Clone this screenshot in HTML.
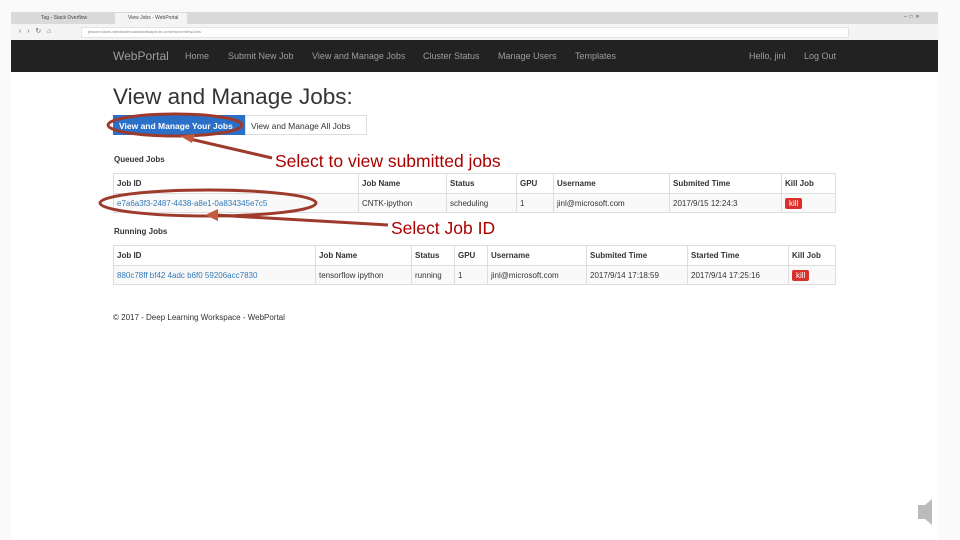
<!DOCTYPE html><html><head><style>
*{margin:0;padding:0;box-sizing:border-box}
body{width:960px;height:540px;background:#fafafa;position:relative;overflow:hidden;font-family:"Liberation Sans",sans-serif}
.a{position:absolute}
.win{left:11px;top:12px;width:927px;height:528px;background:#fff}
.tabs{left:11px;top:12px;width:927px;height:12px;background:#dadada;font-size:5px;color:#444}
.addr{left:11px;top:24px;width:927px;height:16px;background:#f4f4f4}
.nav{left:11px;top:40px;width:927px;height:32px;background:#222;color:#9d9d9d;font-size:9px}
.nav span{position:absolute;top:11px}
table{position:absolute;border-collapse:collapse;font-size:8px;color:#333}
td,th{border:1px solid #ddd;padding:0 3px;height:20px;text-align:left;white-space:nowrap}
th{font-weight:bold}
tr.s td{background:#f9f9f9;height:19px}
.lk{color:#337ab7}
.kill{background:#d9302c;color:#fff;padding:1px 4px;border-radius:2px;font-size:8px}
.red{color:#a00;font-size:17.5px}
</style></head><body>
<div class="a win"></div>
<div class="a tabs"><span class="a" style="left:30px;top:3px">Tag - Stack Overflow</span><div class="a" style="left:104px;top:1px;width:72px;height:11px;background:#f4f4f4"></div><span class="a" style="left:117px;top:3px">View Jobs - WebPortal</span><span class="a" style="left:893px;top:2px">–&nbsp;&nbsp;□&nbsp;&nbsp;✕</span></div>
<div class="a addr"><div class="a" style="left:70px;top:3px;width:768px;height:11px;background:#fff;border:1px solid #e4e4e4"></div><span class="a" style="left:8px;top:3px;font-size:7px;color:#666">‹&nbsp;&nbsp;&nbsp;›&nbsp;&nbsp;&nbsp;↻&nbsp;&nbsp;&nbsp;⌂</span><span class="a" style="left:77px;top:5px;font-size:4px;color:#888">jinlcom.blobs.webhostnnoaulwlvdlsapzure.com/Home/ViewJobs</span></div>
<div class="a nav"><span style="left:102px;top:9px;font-size:12px">WebPortal</span><span style="left:174px">Home</span><span style="left:217px">Submit New Job</span><span style="left:301px">View and Manage Jobs</span><span style="left:412px">Cluster Status</span><span style="left:487px">Manage Users</span><span style="left:564px">Templates</span><span style="left:738px">Hello, jinl</span><span style="left:793px">Log Out</span></div>
<div class="a" style="left:113px;top:84px;font-size:22.5px;color:#333">View and Manage Jobs:</div>
<div class="a" style="left:113px;top:115px;width:132px;height:20px;background:#2a70c8;color:#fff;font-size:8.5px;font-weight:bold;padding:6px 0 0 6px">View and Manage Your Jobs</div>
<div class="a" style="left:245px;top:115px;width:122px;height:20px;border:1px solid #ddd;color:#333;font-size:8.5px;padding:5px 0 0 5px">View and Manage All Jobs</div>
<div class="a" style="left:114px;top:155px;font-size:8px;font-weight:bold;color:#333">Queued Jobs</div>
<table style="left:113px;top:173px;width:723px"><tr><th style="width:245px">Job ID</th><th style="width:88px">Job Name</th><th style="width:70px">Status</th><th style="width:37px">GPU</th><th style="width:116px">Username</th><th style="width:112px">Submited Time</th><th>Kill Job</th></tr>
<tr class="s"><td class="lk">e7a6a3f3-2487-4438-a8e1-0a834345e7c5</td><td>CNTK-ipython</td><td>scheduling</td><td>1</td><td>jinl@microsoft.com</td><td>2017/9/15 12:24:3</td><td><span class="kill">kill</span></td></tr></table>
<div class="a" style="left:114px;top:227px;font-size:8px;font-weight:bold;color:#333">Running Jobs</div>
<table style="left:113px;top:245px;width:723px"><tr><th style="width:202px">Job ID</th><th style="width:96px">Job Name</th><th style="width:43px">Status</th><th style="width:33px">GPU</th><th style="width:99px">Username</th><th style="width:101px">Submited Time</th><th style="width:101px">Started Time</th><th>Kill Job</th></tr>
<tr class="s"><td class="lk">880c78ff bf42 4adc b6f0 59206acc7830</td><td>tensorflow ipython</td><td>running</td><td>1</td><td>jinl@microsoft.com</td><td>2017/9/14 17:18:59</td><td>2017/9/14 17:25:16</td><td><span class="kill">kill</span></td></tr></table>
<div class="a" style="left:113px;top:313px;font-size:8px;color:#333">© 2017 - Deep Learning Workspace - WebPortal</div>
<div class="a red" style="left:275px;top:151px">Select to view submitted jobs</div>
<div class="a red" style="left:391px;top:218px">Select Job ID</div>
<svg class="a" style="left:0;top:0" width="960" height="540"><g fill="none" stroke="#9e3a2c" stroke-width="3"><ellipse cx="175" cy="125" rx="67" ry="11"/><ellipse cx="208" cy="203" rx="108" ry="13"/><line x1="272" y1="158" x2="190" y2="139"/><line x1="388" y1="225" x2="215" y2="215"/></g><g fill="#c45a40"><polygon points="180,136 195,134 192,143"/><polygon points="205,215 218,209 218,221"/></g><polygon points="918,505 925,505 932,499 932,525 925,519 918,519" fill="#bbb"/></svg>
</body></html>
